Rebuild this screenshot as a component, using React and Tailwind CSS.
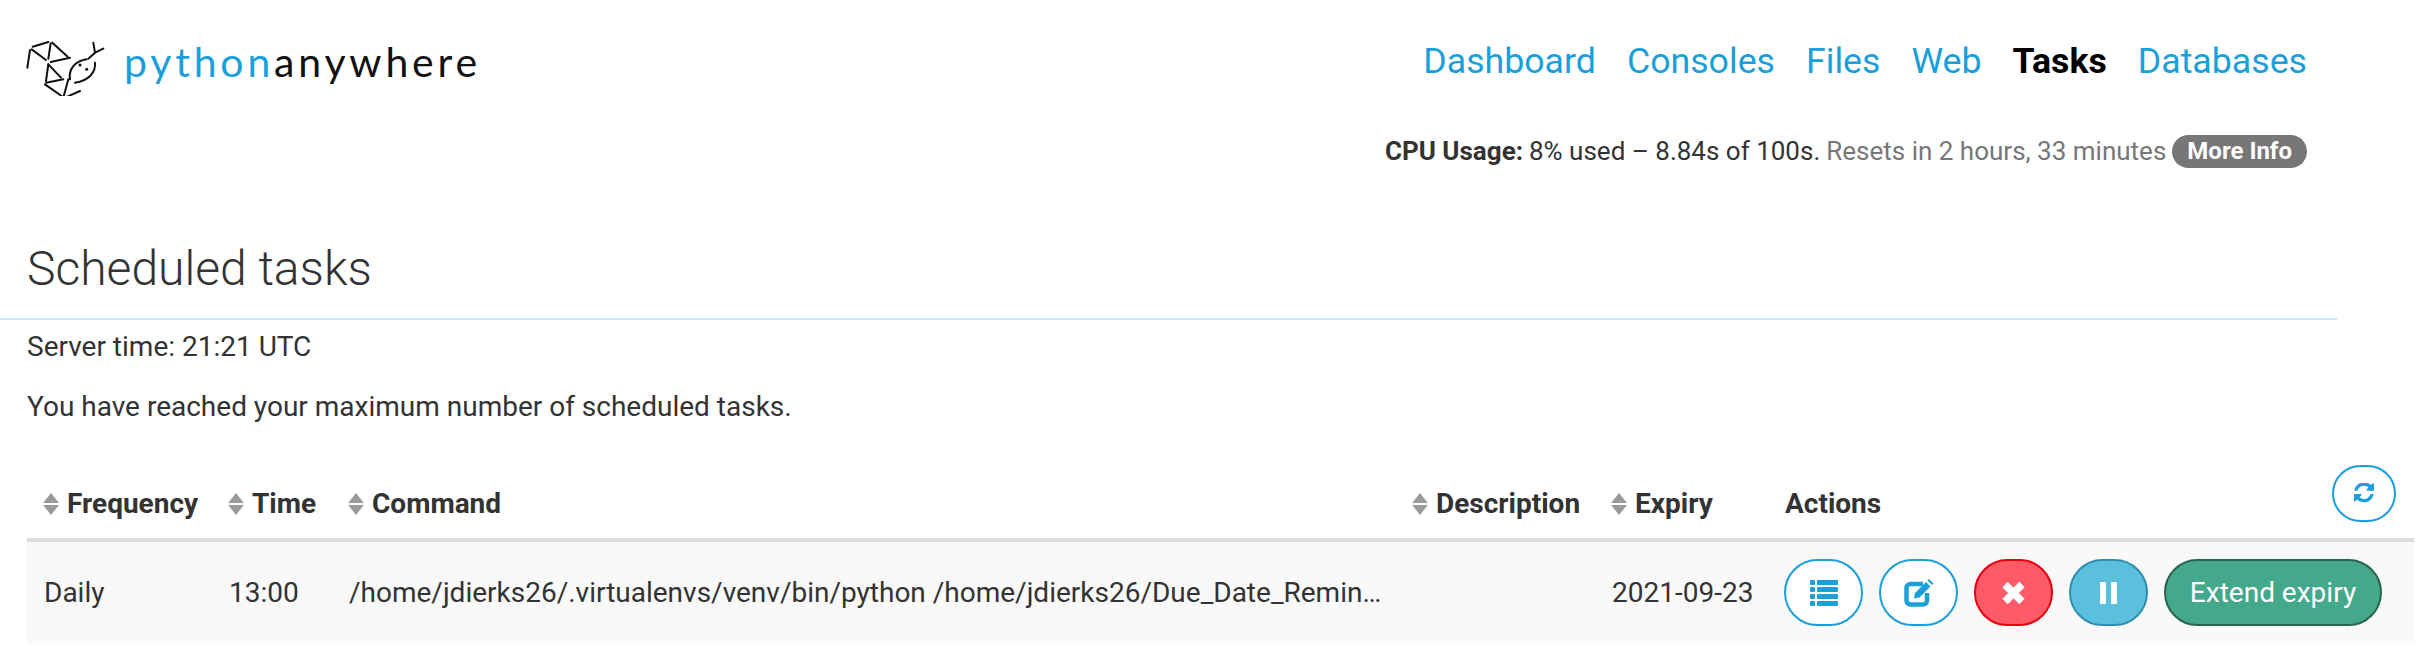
const navItems = ["Dashboard", "Consoles", "Files", "Web", "Tasks", "Databases"];

const logoLines = [
  "M38 52L85 38", "M30 62L22 115", "M35 60L78 92", "M97 40L143 82", "M92 42L85 88",
  "M150 85L92 98", "M85 105L123 145", "M85 105L78 155", "M130 150L78 160",
  "M75 165L125 200", "M145 150L130 205", "M135 205L180 185",
  "M220 40L225 70L250 58", "M225 70L205 88",
  "M150 150C145 120 165 95 200 90", "M225 100C228 130 205 155 165 160",
];

function Logo() {
  return (
    <div className="flex items-center">
      <svg viewBox="0 -10 270 210" className="w-[90px] h-[70px] shrink-0 ml-[-7px]" fill="none" stroke="#111" strokeWidth="6" strokeLinecap="round" strokeLinejoin="round">
        {logoLines.map((d) => (
          <path key={d} d={d} />
        ))}
        <circle cx="180" cy="107" r="4.500" fill="#111" stroke="none" />
        <circle cx="200" cy="120" r="4.500" fill="#111" stroke="none" />
      </svg>
      <span className="ml-[14px] font-['Lato'] font-normal text-[41px] leading-none tracking-[3.800px] text-[#111]">
        <span className="text-[#1b9fdb]">python</span>anywhere
      </span>
    </div>
  );
}

function SortIcon() {
  return (
    <svg viewBox="0 0 16 22" className="w-[16px] h-[22px] shrink-0" fill="#9a9a9a">
      <polygon points="8,0 16,10 0,10" />
      <polygon points="0,12 16,12 8,22" />
    </svg>
  );
}

function SortHead({ children }) {
  return (
    <span className="flex items-center gap-[8px]">
      <SortIcon />
      {children}
    </span>
  );
}

function ListIcon() {
  return (
    <svg viewBox="0 0 28 26" className="w-[28px] h-[26px]" fill="currentColor">
      {[0, 7, 14, 21].map((y) => (
        <g key={y}>
          <rect x="0" y={y} width="5" height="5" rx="1" />
          <rect x="7" y={y} width="21" height="5" rx="1" />
        </g>
      ))}
    </svg>
  );
}

function EditIcon() {
  return (
    <svg viewBox="0 0 30 29" className="w-[30px] h-[29px]" fill="none">
      <path d="M19 6H6.500A4 4 0 0 0 2.500 10V22.500A4 4 0 0 0 6.500 26.500H19A4 4 0 0 0 23 22.500V15" stroke="currentColor" strokeWidth="4.500" />
      <path d="M10 20.500L11 15L22 4L26.500 8.500L15.500 19.500Z" fill="currentColor" />
      <path d="M23.500 2.500L25 1L29.500 5.500L28 7Z" fill="currentColor" />
    </svg>
  );
}

function TimesIcon() {
  return (
    <svg viewBox="0 0 24 24" className="w-[25px] h-[24px]" fill="none" stroke="currentColor" strokeWidth="7.500">
      <path d="M3.500 3.500L20.500 20.500M20.500 3.500L3.500 20.500" />
    </svg>
  );
}

function PauseIcon() {
  return (
    <svg viewBox="0 0 17 22" className="w-[17px] h-[22px]" fill="currentColor">
      <rect x="0" y="0" width="6" height="22" rx="1" />
      <rect x="11" y="0" width="6" height="22" rx="1" />
    </svg>
  );
}

function RefreshIcon() {
  return (
    <svg viewBox="0 64 1536 1664" className="w-[20px] h-[22px]" fill="currentColor">
      <path d="M1511 928q0 5-1 7-64 268-268 434.500t-478 166.500q-146 0-282.500-55t-243.500-157l-129 129q-19 19-45 19t-45-19-19-45v-448q0-26 19-45t45-19h448q26 0 45 19t19 45-19 45l-137 137q71 66 161 102t187 36q134 0 250-65t186-179q11-17 53-117 8-23 30-23h192q13 0 22.500 9.500t9.500 22.500zm25-800v448q0 26-19 45t-45 19h-448q-26 0-45-19t-19-45 19-45l138-138q-148-137-349-137-134 0-250 65t-186 179q-11 17-53 117-8 23-30 23h-199q-13 0-22.500-9.500t-9.500-22.500v-7q65-268 270-434.500t480-166.500q146 0 284 55.500t245 156.500l130-129q19-19 45-19t45 19 19 45z" />
    </svg>
  );
}

function ActionButton({ className, children }) {
  return (
    <button type="button" className={`h-[67px] rounded-full border-2 flex items-center justify-center ${className}`}>
      {children}
    </button>
  );
}

export default function App() {
  return (
    <div className="bg-white w-[2436px] h-[671px] overflow-hidden font-['Roboto',sans-serif] text-[#333] pl-[27px]">
      <div className="w-[2310px]">
        <header className="flex items-start justify-between pr-[30px] pt-[26px]">
          <Logo />
          <div className="flex flex-col items-end pt-[14px]">
            <nav className="flex gap-[31px] text-[35.700px] leading-[42px] text-[#1b9fdb]">
              {navItems.map((item) => (
                <a key={item} className={item === "Tasks" ? "font-bold text-black" : ""}>
                  {item}
                </a>
              ))}
            </nav>
            <p className="mt-[53px] flex items-center text-[26px] leading-[33px]">
              <b>CPU Usage:</b>
              <span className="ml-[6px]">8% used – 8.84s of 100s.</span>
              <span className="ml-[6px] text-[#777]">Resets in 2 hours, 33 minutes</span>
              <span className="ml-[6px] bg-[#777] text-white font-bold rounded-full px-[15px] text-[24px]">More Info</span>
            </p>
          </div>
        </header>

        <h1 className="mt-[74px] -ml-[27px] pl-[27px] text-[48px] leading-[54px] font-light border-b-2 border-[#c2ecfd] pb-[22px]">Scheduled tasks</h1>
      </div>

      <p className="mt-[11px] text-[28px] leading-[32px]">Server time: 21:21 UTC</p>
      <p className="mt-[28px] text-[28px] leading-[32px]">You have reached your maximum number of scheduled tasks.</p>

      <table className="mt-[38px] w-[2387px] table-fixed text-[28px] border-collapse">
        <colgroup>
          <col className="w-[185px]" />
          <col className="w-[120px]" />
          <col className="w-[1064px]" />
          <col className="w-[199px]" />
          <col className="w-[174px]" />
          <col />
        </colgroup>
        <thead>
          <tr className="h-[79px] border-b-4 border-[#ddd] font-bold text-left">
            <th className="pl-[16px] pb-[13px] align-bottom"><SortHead>Frequency</SortHead></th>
            <th className="pl-[16px] pb-[13px] align-bottom"><SortHead>Time</SortHead></th>
            <th className="pl-[16px] pb-[13px] align-bottom"><SortHead>Command</SortHead></th>
            <th className="pl-[16px] pb-[13px] align-bottom"><SortHead>Description</SortHead></th>
            <th className="pl-[16px] pb-[13px] align-bottom"><SortHead>Expiry</SortHead></th>
            <th className="pl-[16px] pb-[13px] align-bottom">
              <div className="flex items-end justify-between pr-[18px]">
                Actions
                <button type="button" className="w-[64px] h-[57px] mb-[3px] rounded-full border-2 border-[#1b9fdb] text-[#1b9fdb] flex items-center justify-center">
                  <RefreshIcon />
                </button>
              </div>
            </th>
          </tr>
        </thead>
        <tbody>
          <tr className="h-[103px] bg-[#f9f9f9]">
            <td className="pl-[17px]">Daily</td>
            <td className="pl-[17px]">13:00</td>
            <td className="pl-[17px] whitespace-nowrap">/home/jdierks26/.virtualenvs/venv/bin/python /home/jdierks26/Due_Date_Remin…</td>
            <td className="pl-[17px]"></td>
            <td className="pl-[17px]">2021-09-23</td>
            <td className="pl-[15px]">
              <div className="flex gap-[16px]">
                <ActionButton className="w-[79px] bg-white border-[#1b9fdb] text-[#1b9fdb]"><ListIcon /></ActionButton>
                <ActionButton className="w-[79px] bg-white border-[#1b9fdb] text-[#1b9fdb]"><EditIcon /></ActionButton>
                <ActionButton className="w-[79px] bg-[#ff5a67] border-[#e8000f] text-white"><TimesIcon /></ActionButton>
                <ActionButton className="w-[79px] bg-[#5bc0de] border-[#2e8fb0] text-white"><PauseIcon /></ActionButton>
                <ActionButton className="w-[218px] bg-[#43a98a] border-[#2a6350] text-white">Extend expiry</ActionButton>
              </div>
            </td>
          </tr>
        </tbody>
      </table>
    </div>
  );
}
